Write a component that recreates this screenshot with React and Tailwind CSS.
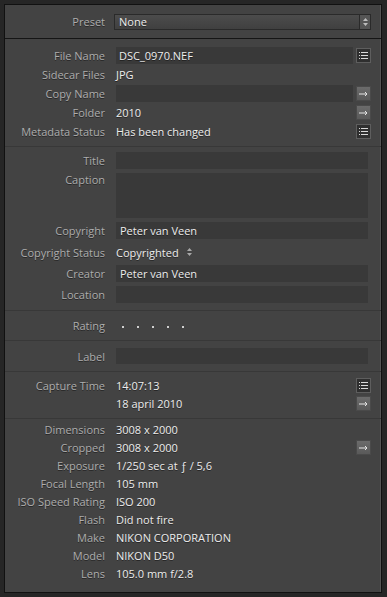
import React from "react";

// Small Lightroom-style icon buttons
const ListIcon = () => (
  <svg width="15" height="15" viewBox="0 0 15 15" className="block">
    <rect x="0.5" y="0.5" width="14" height="14" fill="#2f2f2f" stroke="#5e5e5e" />
    {[4, 7, 10].map((y) => (
      <g key={y}>
        <rect x="3" y={y} width="1" height="1" fill="#d8d8d8" />
        <rect x="5" y={y} width="7" height="1" fill="#d8d8d8" />
      </g>
    ))}
  </svg>
);

const ArrowIcon = () => (
  <svg width="15" height="15" viewBox="0 0 15 15" className="block">
    <defs>
      <linearGradient id="ag" x1="0" y1="0" x2="0" y2="1">
        <stop offset="0" stopColor="#6c6c6c" />
        <stop offset="1" stopColor="#595959" />
      </linearGradient>
    </defs>
    <rect x="0.5" y="0.5" width="14" height="14" fill="url(#ag)" stroke="#4a4a4a" />
    <path d="M3 8h8M9 6l2 2-2 2" fill="none" stroke="#e6e6e6" strokeWidth="1" />
  </svg>
);

const Field = ({ children, className = "h-[17px]" }) => (
  <div className={`flex-1 bg-[#393939] flex items-center px-[3px] text-[#ededed] ${className}`}>
    {children}
  </div>
);

const Label = ({ children }) => (
  <div className="w-[100px] shrink-0 text-right text-[#adadad]">{children}</div>
);

const Row = ({ label, children, icon, className = "h-[19px] items-center" }) => (
  <div className={`flex ${className}`}>
    <Label>{label}</Label>
    <div className="ml-[11px] flex-1 flex items-center text-[#ededed] h-full">{children}</div>
    <div className="w-[15px] ml-[3px] mr-[10px] shrink-0 flex items-center">{icon}</div>
  </div>
);

const FieldRow = ({ label, height = "h-[17px]", top = false, value }) => (
  <div className={`flex ${top ? "items-start" : "items-center"} ${height}`}>
    <div className={`w-[100px] shrink-0 text-right text-[#adadad] ${top ? "pt-[1px]" : ""}`}>{label}</div>
    <div className="ml-[11px] mr-[13px] flex-1 bg-[#393939] h-full flex items-center px-[4px] text-[#ededed]">
      {value}
    </div>
  </div>
);

const Divider = ({ dark }) => (
  <div className={dark ? "h-[1px] bg-[#151515]" : "h-[1px] bg-[#383838]"} />
);

export default function App() {
  return (
    <div
      className="w-[387px] h-[597px] bg-[#262626] pt-[4px] pl-[4px] text-[11px] leading-none [text-shadow:0_1px_0_rgba(0,0,0,0.45)]"
      style={{ fontFamily: '"Open Sans", "Liberation Sans", sans-serif' }}
    >
      <div className="w-[378px] h-[589px] border border-[#111] bg-[#434343] flex flex-col shadow-[inset_-1px_0_0_#555]">
        {/* Preset */}
        <div className="h-[33px] flex items-center">
          <Label>Preset</Label>
          <div className="ml-[9px] w-[257px] h-[16px] border border-[#2a2a2a] bg-gradient-to-b from-[#4c4c4c] to-[#404040] flex items-center">
            <span className="flex-1 pl-[4px] text-[#ededed]">None</span>
            <div className="w-[11px] h-full border-l border-[#2a2a2a] bg-[#555] flex items-center justify-center">
              <svg width="7" height="10" viewBox="0 0 7 10">
                <path d="M1 4l2.5-3 2.5 3zM1 6l2.5 3 2.5-3z" fill="#bdbdbd" />
              </svg>
            </div>
          </div>
        </div>
        <Divider dark />

        {/* File info */}
        <div className="pt-[7px] pb-[5px]">
          <Row label="File Name" icon={<ListIcon />}>
            <Field className="h-[17px]">DSC_0970.NEF</Field>
          </Row>
          <Row label="Sidecar Files">JPG</Row>
          <Row label="Copy Name" icon={<ArrowIcon />}>
            <Field className="h-[17px]" />
          </Row>
          <Row label="Folder" icon={<ArrowIcon />}>2010</Row>
          <Row label="Metadata Status" icon={<ListIcon />}>Has been changed</Row>
        </div>
        <Divider />

        {/* IPTC */}
        <div className="pt-[5px] pb-[7px] flex flex-col gap-[4px]">
          <FieldRow label="Title" />
          <FieldRow label="Caption" height="h-[45px]" top />
          <FieldRow label="Copyright" value="Peter van Veen" />
          <div className="flex items-center h-[18px]">
            <Label>Copyright Status</Label>
            <span className="ml-[11px] text-[#ededed]">Copyrighted</span>
            <svg width="7" height="10" viewBox="0 0 7 10" className="ml-[7px]">
              <path d="M1 4l2.5-3 2.5 3zM1 6l2.5 3 2.5-3z" fill="#a8a8a8" />
            </svg>
          </div>
          <FieldRow label="Creator" value="Peter van Veen" />
          <FieldRow label="Location" />
        </div>
        <Divider />

        {/* Rating */}
        <div className="h-[29px] flex items-center">
          <Label>Rating</Label>
          <div className="ml-[17px] flex gap-[13px] items-center pt-[3px]">
            {[0, 1, 2, 3, 4].map((i) => (
              <div key={i} className="w-[2px] h-[2px] bg-[#cfcfcf]" />
            ))}
          </div>
        </div>
        <Divider />

        {/* Label */}
        <div className="h-[30px] flex items-center">
          <div className="w-full">
            <FieldRow label="Label" height="h-[16px]" />
          </div>
        </div>
        <Divider />

        {/* Capture time */}
        <div className="pt-[4px] pb-[6px]">
          <Row label="Capture Time" className="h-[18px] items-center" icon={<ListIcon />}>14:07:13</Row>
          <Row label="" className="h-[18px] items-center" icon={<ArrowIcon />}>18 april 2010</Row>
        </div>
        <Divider />

        {/* EXIF */}
        <div className="pt-[1px]">
          {[
            ["Dimensions", "3008 x 2000"],
            ["Cropped", "3008 x 2000", true],
            ["Exposure", "1/250 sec at ƒ / 5,6"],
            ["Focal Length", "105 mm"],
            ["ISO Speed Rating", "ISO 200"],
            ["Flash", "Did not fire"],
            ["Make", "NIKON CORPORATION"],
            ["Model", "NIKON D50"],
            ["Lens", "105.0 mm f/2.8"],
          ].map(([label, value, arrow]) => (
            <Row key={label} label={label} className="h-[18px] items-center" icon={arrow ? <ArrowIcon /> : null}>
              {value}
            </Row>
          ))}
        </div>
      </div>
    </div>
  );
}
